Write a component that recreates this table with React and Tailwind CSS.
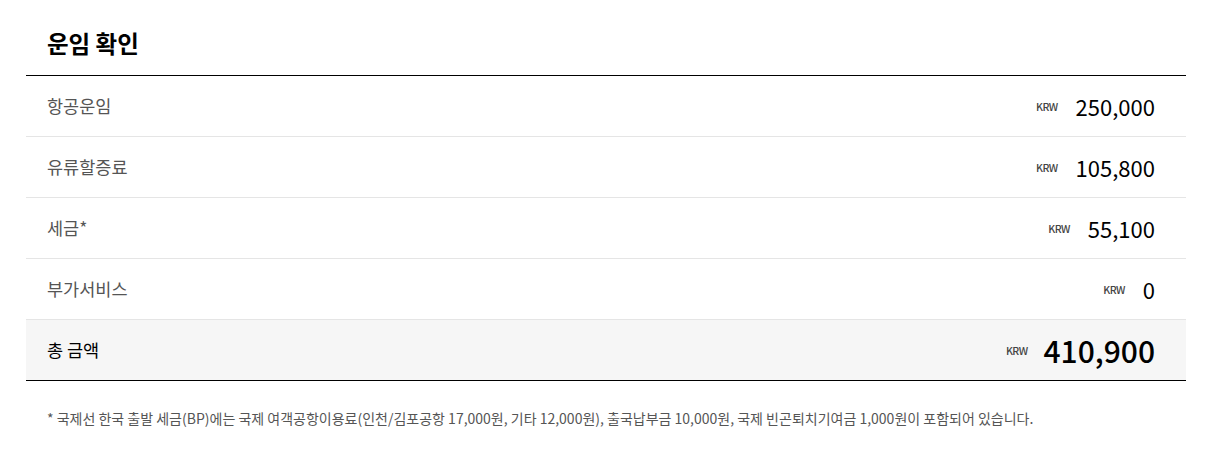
export default function App() {
  const rows = [
    ["항공운임", "250,000"],
    ["유류할증료", "105,800"],
    ["세금*", "55,100"],
    ["부가서비스", "0"],
  ];
  const font = { fontFamily: '"Noto Sans CJK KR", "Noto Sans", sans-serif' };
  return (
    <div className="w-[1208px] h-[453px] bg-white pl-[26px] pr-[22px]" style={font}>
      <div className="h-[75px] flex items-center px-[21px] pt-[13px]">
        <h2 className="text-[23.5px] font-bold text-black leading-none">운임 확인</h2>
      </div>
      <div className="border-t border-black">
        {rows.map(([label, value]) => (
          <div key={label} className="h-[61px] flex items-center justify-between pl-[21px] pr-[31px] border-b border-[#e5e5e5]">
            <span className="text-[17.5px] text-[#555]">{label}</span>
            <span className="flex items-center">
              <span className="text-[10.5px] font-medium tracking-[-0.6px] text-[#444] mr-[18px] pt-[1px]">KRW</span>
              <span className="text-[22px] text-black">{value}</span>
            </span>
          </div>
        ))}
        <div className="h-[61px] flex items-center justify-between pl-[21px] pr-[31px] bg-[#f6f6f6] border-b border-black">
          <span className="text-[17.5px] text-black">총 금액</span>
          <span className="flex items-center">
            <span className="text-[10.5px] font-medium tracking-[-0.6px] text-[#444] mr-[16px] pt-[2px]">KRW</span>
            <span className="text-[30px] font-medium text-black">410,900</span>
          </span>
        </div>
      </div>
      <p className="pl-[21px] mt-[27px] text-[14px] text-[#555]">
        * 국제선 한국 출발 세금(BP)에는 국제 여객공항이용료(인천/김포공항 17,000원, 기타 12,000원), 출국납부금 10,000원, 국제 빈곤퇴치기여금 1,000원이 포함되어 있습니다.
      </p>
    </div>
  );
}
